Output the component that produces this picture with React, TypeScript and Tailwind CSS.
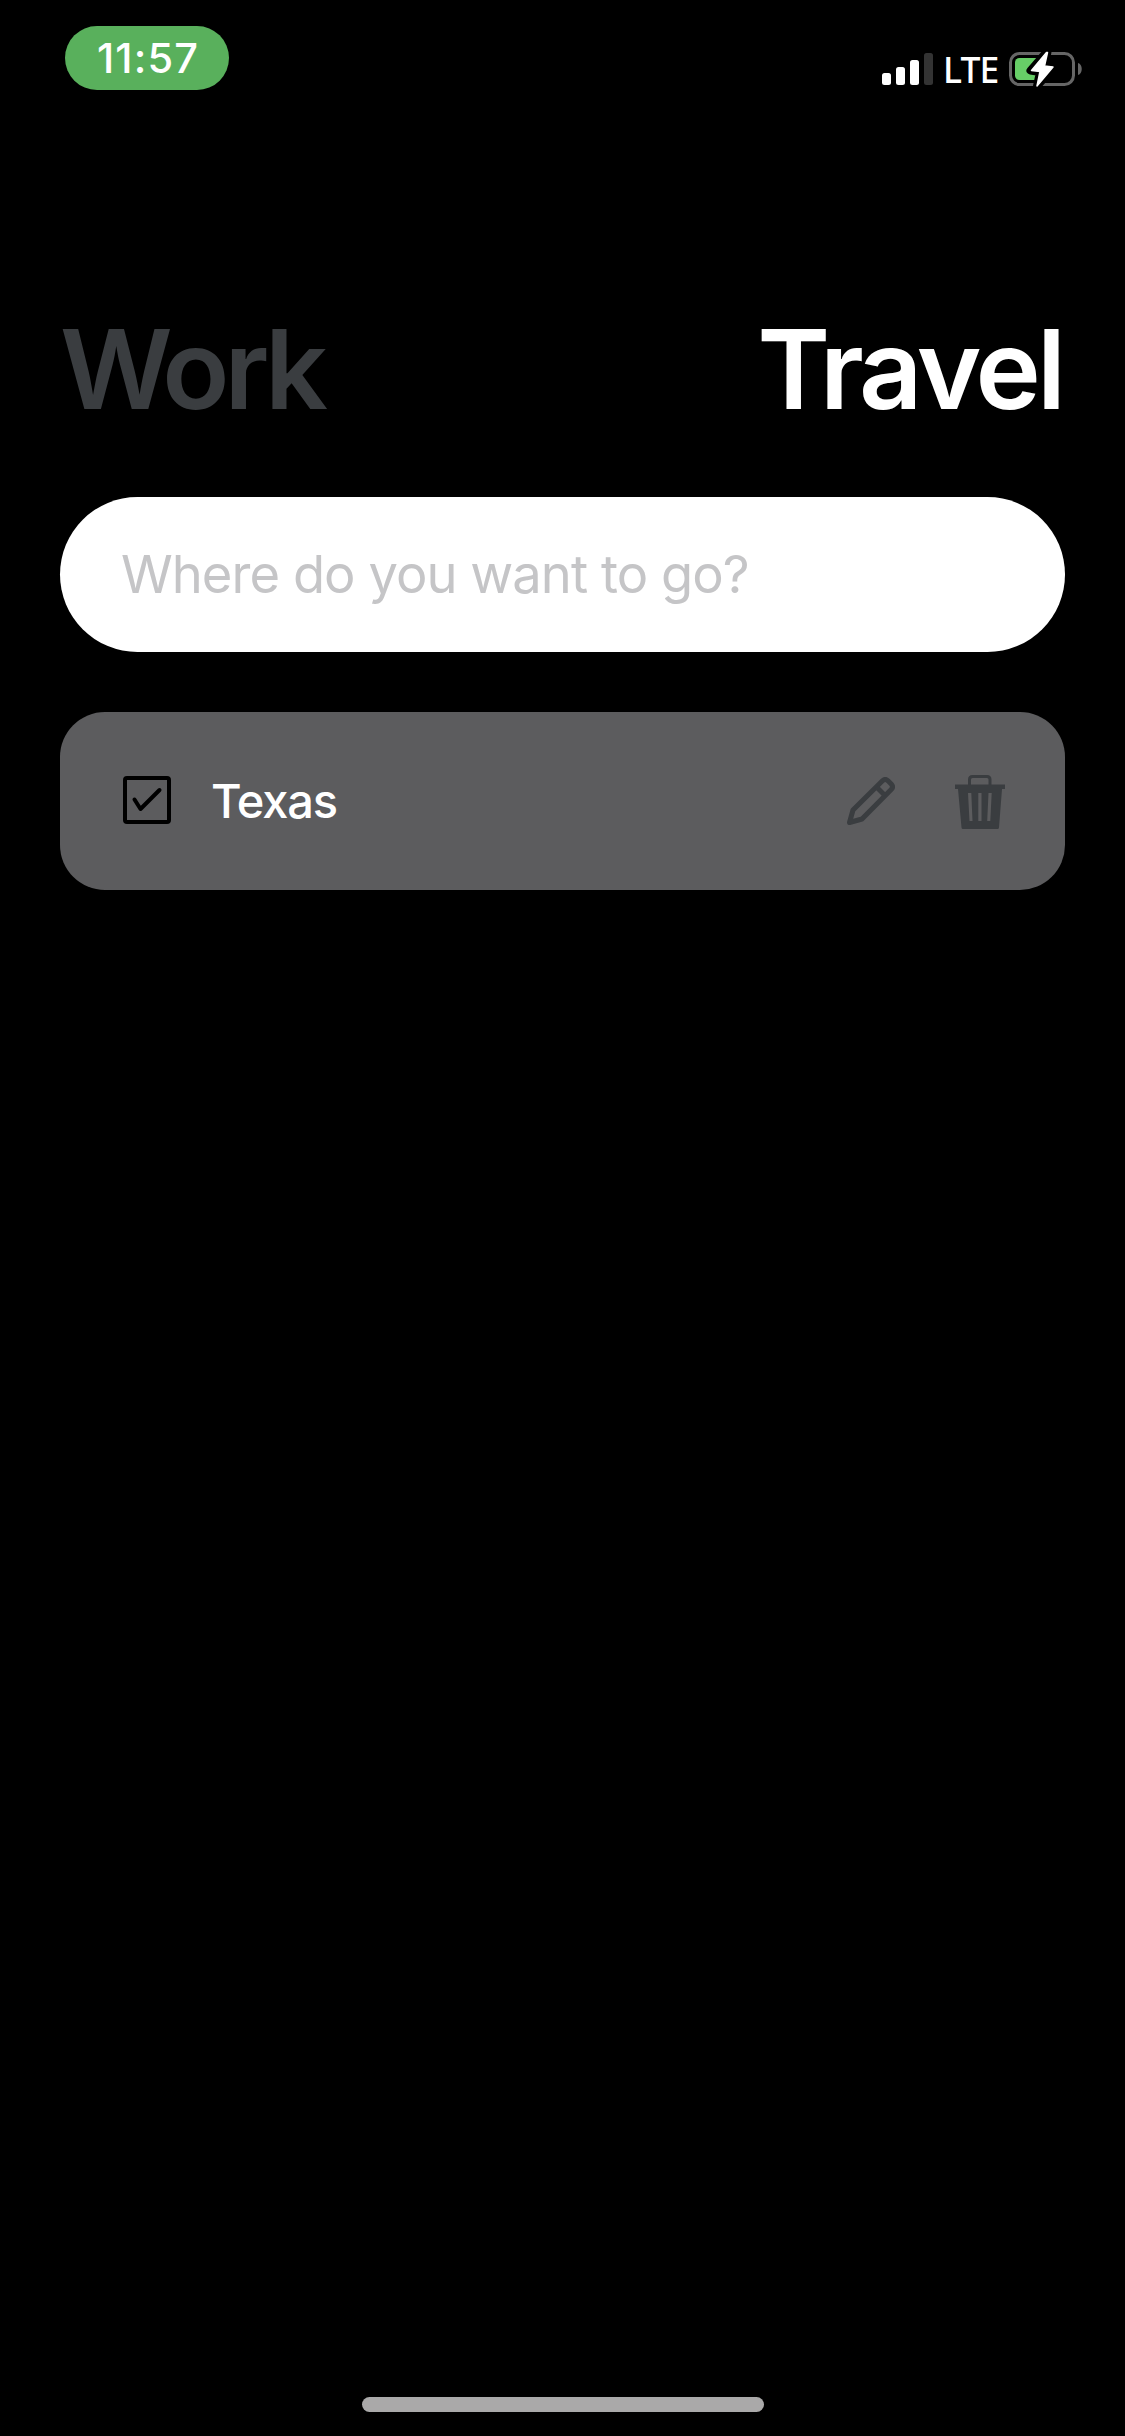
function StatusBar() {
  return (
    <header className="flex h-[132px] items-start justify-between pl-[65px] pr-[43px] pt-[26px]">
      <div className="flex h-16 w-[164px] items-center justify-center rounded-[32px] bg-[#59b05c]">
        <span className="pl-[2px] pt-[2px] text-[41.5px] font-medium leading-none tracking-[1.1px] text-white">11:57</span>
      </div>
      <div className="mt-[26px] flex h-[34px] items-center">
        <svg width="52" height="34" viewBox="0 0 52 34" fill="#fff">
          <rect x="0" y="21" width="9" height="12" rx="2.5" />
          <rect x="14" y="15" width="9" height="18" rx="2.5" />
          <rect x="28" y="8" width="9" height="25" rx="2.5" />
          <rect x="42" y="1" width="9" height="32" rx="2.5" fill="#333" />
        </svg>
        <span className="ml-[9px] w-[66px] whitespace-nowrap font-['Noto_Sans',sans-serif] text-[35.5px] font-medium leading-[34px] tracking-[-0.8px] text-white">LTE</span>
        <svg width="73" height="34" viewBox="0 0 73 34" className="overflow-visible">
          <rect x="1.5" y="1.5" width="63" height="31" rx="9" fill="none" stroke="#666" strokeWidth="3" />
          <path d="M69 11c5 1 5 11 0 12z" fill="#666" />
          <rect x="6" y="6" width="28" height="22" rx="4.5" fill="#67ce67" />
          <path d="M37.500 0L21.500 18.500L31 20L28 34L45 15L35.500 14L38.500 0Z" fill="#fff" stroke="#000" strokeWidth="8" strokeLinejoin="round" />
          <path d="M37.500 0.500L22.500 18.500L31 19.500L28 34L44 15L35.500 14L38.500 0.500Z" fill="#fff" stroke="#fff" strokeWidth="1.500" strokeLinejoin="round" />
        </svg>
      </div>
    </header>
  );
}

function CheckIcon() {
  return (
    <svg width="48" height="48" viewBox="0 0 48 48" fill="none" stroke="#000">
      <rect x="2" y="2" width="44" height="44" rx="2" strokeWidth="4" />
      <path d="M11.500 23.500L17.500 33L36.500 14" strokeWidth="4" strokeLinecap="round" strokeLinejoin="round" />
    </svg>
  );
}

function PencilIcon() {
  return (
    <svg width="48" height="48" viewBox="0 0 48 48" fill="none" stroke="#3a3d40" strokeWidth="5" strokeLinejoin="round">
      <path d="M2.500 45.500L6 33L35.500 3.800Q38.200 1.200 41 3.800L44.200 7Q46.800 9.800 44.200 12.500L15 42Z" />
      <path d="M29.500 10L38 18.500" />
    </svg>
  );
}

function TrashIcon() {
  return (
    <svg width="50" height="54" viewBox="0 0 50 54">
      <path d="M14.500 11V4.500Q14.500 1.500 17.500 1.500H32Q35 1.500 35 4.500V11" fill="none" stroke="#3a3d40" strokeWidth="3" />
      <path fill="#3a3d40" fillRule="evenodd" d="M0 9.500H50V14H47L44 52.500Q43.900 54 42.500 54H8Q6.600 54 6.500 52.500L3 14H0ZM13 18L14.500 46H17.500L16.300 18ZM23.300 18V46H26.500V18ZM33.500 18L32.200 46H35.300L36.700 18Z" />
    </svg>
  );
}

export default function App() {
  return (
    <div className="flex h-[2436px] w-[1125px] flex-col bg-black font-['Inter',sans-serif]">
      <StatusBar />
      <main className="flex flex-1 flex-col px-[60px] pt-[170px]">
        <nav className="flex h-[134px] items-center justify-between pr-[3px] text-[110.5px] font-semibold leading-[134px]">
          <button className="tracking-[-5px] text-[#3a3d40]">Work</button>
          <button className="tracking-[-3.9px] text-white">Travel</button>
        </nav>
        <input
          placeholder="Where do you want to go?"
          className="mt-[61px] h-[155px] w-full rounded-full bg-white px-[61px] pb-[1px] text-[52.5px] tracking-[-0.96px] text-black outline-none placeholder:text-[#c5c5c7]"
        />
        <div className="mt-[60px] flex h-[178px] items-center rounded-[45px] bg-[#5c5c5e] pl-[63px] pr-[60px]">
          <div className="pb-[2px]"><CheckIcon /></div>
          <span className="ml-[40px] flex-1 text-[47px] font-medium tracking-[-1.2px] text-white">Texas</span>
          <button className="mr-[60px]"><PencilIcon /></button>
          <button className="pt-[2px]"><TrashIcon /></button>
        </div>
      </main>
      <footer className="flex justify-center pb-6">
        <div className="h-[15px] w-[402px] rounded-full bg-[#aaa9a9]" />
      </footer>
    </div>
  );
}
